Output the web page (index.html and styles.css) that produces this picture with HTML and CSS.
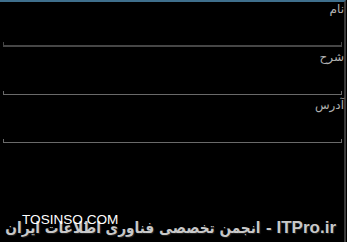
FILE: index.html
```html
<!DOCTYPE html>
<html lang="fa">
<head>
<meta charset="utf-8">
<link rel="stylesheet" href="styles.css">
</head>
<body>
<div class="screen">
  <div class="form">
    <div class="field">
      <div class="label">نام</div>
      <div class="input input-first"></div>
    </div>
    <div class="field">
      <div class="label">شرح</div>
      <div class="input"></div>
    </div>
    <div class="field">
      <div class="label">آدرس</div>
      <div class="input"></div>
    </div>
  </div>
  <div class="watermark">
    <div class="wm-main"><span class="wm-latin">ITPro.ir -</span> <span class="wm-fa">انجمن تخصصی فناوری اطلاعات ایران</span></div>
    <div class="wm-site">TOSINSO.COM</div>
  </div>
</div>
</body>
</html>
```
FILE: styles.css
```css
html, body {
  margin: 0;
  padding: 0;
  background: #000;
}
.screen {
  position: relative;
  width: 344px;
  height: 240px;
  border-top: 2px solid #3f6f8c;
  border-right: 2px solid #3a3a3a;
  background: #000;
  font-family: "DejaVu Sans", "Liberation Sans", sans-serif;
}
.form {
  display: flex;
  flex-direction: column;
}
.field {
  height: 48px;
  display: flex;
  flex-direction: column;
  justify-content: space-between;
}
.label {
  direction: rtl;
  text-align: right;
  color: #b0b0b0;
  font-size: 12px;
  line-height: 15px;
  padding-right: 0;
}
.input {
  height: 3px;
  margin: 0 2px 3px 3px;
  border: 1px solid #6a6a6a;
  border-top: none;
}
.input-first {
  border-color: #464646;
  border-bottom-width: 2px;
}
.watermark {
  position: absolute;
  left: 0;
  right: 0;
  bottom: 0;
  height: 40px;
}
.wm-main {
  position: absolute;
  right: 8px;
  bottom: 4px;
  direction: rtl;
  white-space: nowrap;
  font-weight: bold;
  color: #c8c8c8;
  text-shadow: 1px 1px 1px #222;
}
.wm-latin {
  font-family: "Liberation Sans", Arial, sans-serif;
  font-size: 17px;
}
.wm-fa {
  font-family: "DejaVu Sans Condensed", "DejaVu Sans", sans-serif;
  font-size: 15.2px;
}
.wm-site {
  position: absolute;
  left: 22px;
  top: 10px;
  font-family: "Liberation Sans", Arial, sans-serif;
  font-size: 13.6px;
  color: #fff;
  white-space: nowrap;
}
```
